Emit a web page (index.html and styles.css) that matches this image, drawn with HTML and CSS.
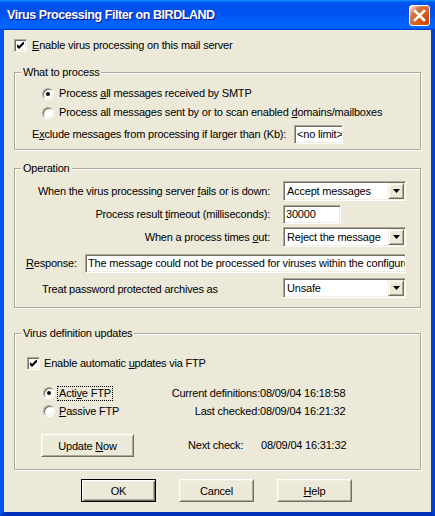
FILE: index.html
```html
<!DOCTYPE html>
<html>
<head>
<meta charset="utf-8">
<link rel="stylesheet" href="styles.css">
</head>
<body>
<div class="window">
  <div class="titlebar">
    <span class="title">Virus Processing Filter on BIRDLAND</span>
    <span class="close"><svg width="19" height="19" viewBox="0 0 19 19"><path d="M5 5 L14 14 M14 5 L5 14" stroke="#fff" stroke-width="2.6" stroke-linecap="square"/></svg></span>
  </div>
  <div class="frame">
    <div class="client">
      <div class="checkrow">
        <span class="chk"><svg width="7" height="7" viewBox="0 0 7 7"><path d="M0 2 L2 4 L7 -1 L7 2 L2 7 L0 5 Z" fill="#000"/></svg></span>
        <span><u>E</u>nable virus processing on this mail server</span>
      </div>

      <fieldset class="group g1">
        <legend>What to process</legend>
        <div class="opt"><span class="radio on"></span><span>Process <u>a</u>ll messages received by SMTP</span></div>
        <div class="opt"><span class="radio"></span><span>Process all messages sent by or to scan enabled <u>d</u>omains/mailboxes</span></div>
        <div class="excl">
          <span class="excl-label">E<u>x</u>clude messages from processing if larger than (Kb):</span>
          <span class="edit w49">&lt;no limit&gt;</span>
        </div>
      </fieldset>

      <fieldset class="group g2">
        <legend>Operation</legend>
        <div class="op-grid">
          <span class="rlabel">When the virus processing server <u>f</u>ails or is down:</span>
          <span class="combo"><span class="combo-text">Accept messages</span><span class="arrow"><svg width="7" height="4" viewBox="0 0 7 4"><path d="M0 0 H7 L3.5 4 Z" fill="#000"/></svg></span></span>
          <span class="rlabel">Process result <u>t</u>imeout (milliseconds):</span>
          <span class="edit w58">30000</span>
          <span class="rlabel">When a process times <u>o</u>ut:</span>
          <span class="combo"><span class="combo-text">Reject the message</span><span class="arrow"><svg width="7" height="4" viewBox="0 0 7 4"><path d="M0 0 H7 L3.5 4 Z" fill="#000"/></svg></span></span>
        </div>
        <div class="resp">
          <span class="resp-label"><u>R</u>esponse:</span>
          <span class="edit w321">The message could not be processed for viruses within the configured time limit.</span>
        </div>
        <div class="treat">
          <span>Treat password protected archives as</span>
          <span class="combo"><span class="combo-text">Unsafe</span><span class="arrow"><svg width="7" height="4" viewBox="0 0 7 4"><path d="M0 0 H7 L3.5 4 Z" fill="#000"/></svg></span></span>
        </div>
      </fieldset>

      <fieldset class="group g3">
        <legend>Virus definition updates</legend>
        <div class="checkrow inner">
          <span class="chk"><svg width="7" height="7" viewBox="0 0 7 7"><path d="M0 2 L2 4 L7 -1 L7 2 L2 7 L0 5 Z" fill="#000"/></svg></span>
          <span>Enable automatic <u>u</u>pdates via FTP</span>
        </div>
        <div class="ftp">
          <span class="ftp-opt"><span class="radio on"></span><span class="focus">Acti<u>v</u>e FTP</span></span>
          <span class="ilabel">Current definitions:</span>
          <span>08/09/04 16:18:58</span>
          <span class="ftp-opt"><span class="radio"></span><span class="nofocus"><u>P</u>assive FTP</span></span>
          <span class="ilabel">Last checked:</span>
          <span>08/09/04 16:21:32</span>
        </div>
        <div class="update-row">
          <button class="btn wide">Update <u>N</u>ow</button>
          <span class="next-label">Next check:</span>
          <span>08/09/04 16:31:32</span>
        </div>
      </fieldset>

      <div class="actions">
        <button class="btn default">OK</button>
        <button class="btn">Cancel</button>
        <button class="btn"><u>H</u>elp</button>
      </div>
    </div>
  </div>
</div>
</body>
</html>
```
FILE: styles.css
```css
html, body {
  margin: 0;
  padding: 0;
  background: #fff;
}
body {
  font-family: "Liberation Sans", Arial, sans-serif;
  font-size: 11px;
  line-height: 13px;
  letter-spacing: -0.2px;
  color: #000;
}
u { text-decoration: underline; text-underline-offset: 1px; }

.window {
  width: 435px;
  height: 516px;
  display: flex;
  flex-direction: column;
}
.titlebar {
  height: 30px;
  flex: 0 0 30px;
  display: flex;
  align-items: center;
  justify-content: space-between;
  padding: 0 5px 0 7px;
  box-sizing: border-box;
  background: linear-gradient(180deg, #0997ff, #0053ee 8%, #0050ee 40%, #0066ff 88%, #0066ff 93%, #005bff 95%, #003dd7 96%, #003dd7);
}
.title {
  font-family: "Liberation Sans", Arial, sans-serif;
  font-weight: bold;
  font-size: 12.5px;
  letter-spacing: -0.45px;
  color: #fff;
  text-shadow: 1px 1px 0 #0f1089;
  padding-top: 1px;
}
.close {
  width: 21px;
  height: 21px;
  box-sizing: border-box;
  border: 1px solid #fff;
  border-radius: 3px;
  display: flex;
  align-items: center;
  justify-content: center;
  background: radial-gradient(circle at 90% 90%, #cc4600 0, #dc6527 55%, #cd7546 70%, #ffccb2 90%, #fff 100%);
}

.frame {
  flex: 1;
  display: flex;
  border-left: 4px solid #0055ea;
  border-right: 4px solid #0040d0;
  border-bottom: 4px solid #0030b8;
  box-shadow: inset 1px 0 0 #166aee, inset -1px 0 0 #0831d9;
}
.client {
  flex: 1;
  background: #ece9d8;
  padding: 9px 10px 0;
  box-sizing: border-box;
}

.checkrow {
  display: flex;
  align-items: center;
  height: 13px;
  gap: 5px;
}
.chk {
  width: 13px;
  height: 13px;
  box-sizing: border-box;
  background: #fff;
  border: 1px solid;
  border-color: #aca899 #fff #fff #aca899;
  box-shadow: inset 1px 1px 0 #716f64, inset -1px -1px 0 #f1efe2;
  display: inline-flex;
  align-items: center;
  justify-content: center;
  flex: 0 0 13px;
}
.radio {
  width: 12px;
  height: 12px;
  flex: 0 0 12px;
  box-sizing: border-box;
  border-radius: 50%;
  background: #fff;
  border: 1px solid;
  border-color: #aca899 #fff #fff #aca899;
  box-shadow: inset 1px 1px 0 #716f64, inset -1px -1px 0 #f1efe2;
  display: inline-flex;
  align-items: center;
  justify-content: center;
}
.radio.on::after {
  content: "";
  width: 4px;
  height: 4px;
  border-radius: 50%;
  background: #000;
}

.group {
  margin: 0;
  padding: 0;
  border: 1px solid #aca899;
  box-shadow: inset 1px 1px 0 #fff, 1px 1px 0 #fff;
  min-width: 0;
}
.group legend {
  margin-left: 6px;
  padding: 0 2px;
  line-height: 13px;
  background: #ece9d8;
}
.g1 { margin-top: 14px; padding: 5px 0 5px; }
.g2 { margin-top: 12px; padding: 6px 0 9px; }
.g3 { margin-top: 19px; padding: 17px 0 12px; }

.opt {
  height: 19px;
  display: flex;
  align-items: center;
  gap: 5px;
  padding-left: 27px;
}
.excl {
  margin-top: 3px;
  height: 19px;
  display: flex;
  align-items: center;
  padding-left: 17px;
}
.excl-label { flex: 0 0 262px; white-space: nowrap; }

.edit {
  box-sizing: border-box;
  height: 19px;
  flex-shrink: 0;
  background: #fff;
  border: 1px solid;
  border-color: #aca899 #fff #fff #aca899;
  box-shadow: inset 1px 1px 0 #716f64, inset -1px -1px 0 #f1efe2;
  padding: 0 2px;
  display: flex;
  align-items: center;
  white-space: nowrap;
  overflow: hidden;
}
.w49 { width: 49px; }
.w58 { width: 58px; justify-self: start; }
.w321 { width: 321px; }

.op-grid {
  display: grid;
  grid-template-columns: 255px 123px;
  grid-template-rows: 20px 20px 20px;
  column-gap: 13px;
  row-gap: 3px;
  align-items: center;
}
.rlabel { text-align: right; white-space: nowrap; }

.combo {
  box-sizing: border-box;
  width: 123px;
  height: 20px;
  flex-shrink: 0;
  background: #fff;
  border: 1px solid;
  border-color: #aca899 #fff #fff #aca899;
  box-shadow: inset 1px 1px 0 #716f64, inset -1px -1px 0 #f1efe2;
  padding: 1px 1px 1px 2px;
  display: flex;
  align-items: center;
}
.combo-text { flex: 1; white-space: nowrap; overflow: hidden; padding-left: 1px; }
.arrow {
  width: 16px;
  height: 16px;
  box-sizing: border-box;
  background: #ece9d8;
  border: 1px solid;
  border-color: #f1efe2 #716f64 #716f64 #f1efe2;
  box-shadow: inset 1px 1px 0 #fff, inset -1px -1px 0 #aca899;
  display: flex;
  align-items: center;
  justify-content: center;
}

.resp {
  margin-top: 7px;
  height: 19px;
  display: flex;
  align-items: center;
  padding-left: 11px;
}
.resp-label { flex: 0 0 59px; }
.treat {
  margin-top: 5px;
  height: 20px;
  display: flex;
  align-items: center;
  justify-content: space-between;
  padding: 0 14px 0 27px;
}
.treat > span:first-child { padding-top: 3px; }

.checkrow.inner { padding-left: 12px; gap: 4px; }
.ftp {
  margin-top: 14px;
  display: grid;
  grid-template-columns: 122px 95px auto;
  grid-auto-rows: 18px;
  align-items: center;
  padding-left: 28px;
}
.ftp-opt { display: flex; align-items: center; gap: 2px; }
.focus { border: 1px dotted #000; padding: 0 1px; line-height: 13px; }
.nofocus { border: 1px solid transparent; padding: 0 1px; }
.ilabel { text-align: right; white-space: nowrap; }

.update-row {
  margin-top: 14px;
  display: flex;
  align-items: center;
  padding-left: 26px;
}
.next-label { margin-left: 54px; width: 73px; }

.btn {
  width: 75px;
  height: 23px;
  box-sizing: border-box;
  margin: 0;
  padding: 0;
  font-family: "Liberation Sans", Arial, sans-serif;
  font-size: 11px;
  letter-spacing: -0.2px;
  color: #000;
  background: #ece9d8;
  border: 1px solid;
  border-color: #fff #716f64 #716f64 #fff;
  box-shadow: inset 1px 1px 0 #f1efe2, inset -1px -1px 0 #aca899;
}
.btn.wide { width: 93px; }
.btn.default {
  border: 1px solid #000;
  box-shadow: inset 1px 1px 0 #fff, inset -1px -1px 0 #716f64, inset 2px 2px 0 #f1efe2, inset -2px -2px 0 #aca899;
}
.actions {
  margin-top: 9px;
  display: flex;
  gap: 23px;
  padding-left: 67px;
}
```
